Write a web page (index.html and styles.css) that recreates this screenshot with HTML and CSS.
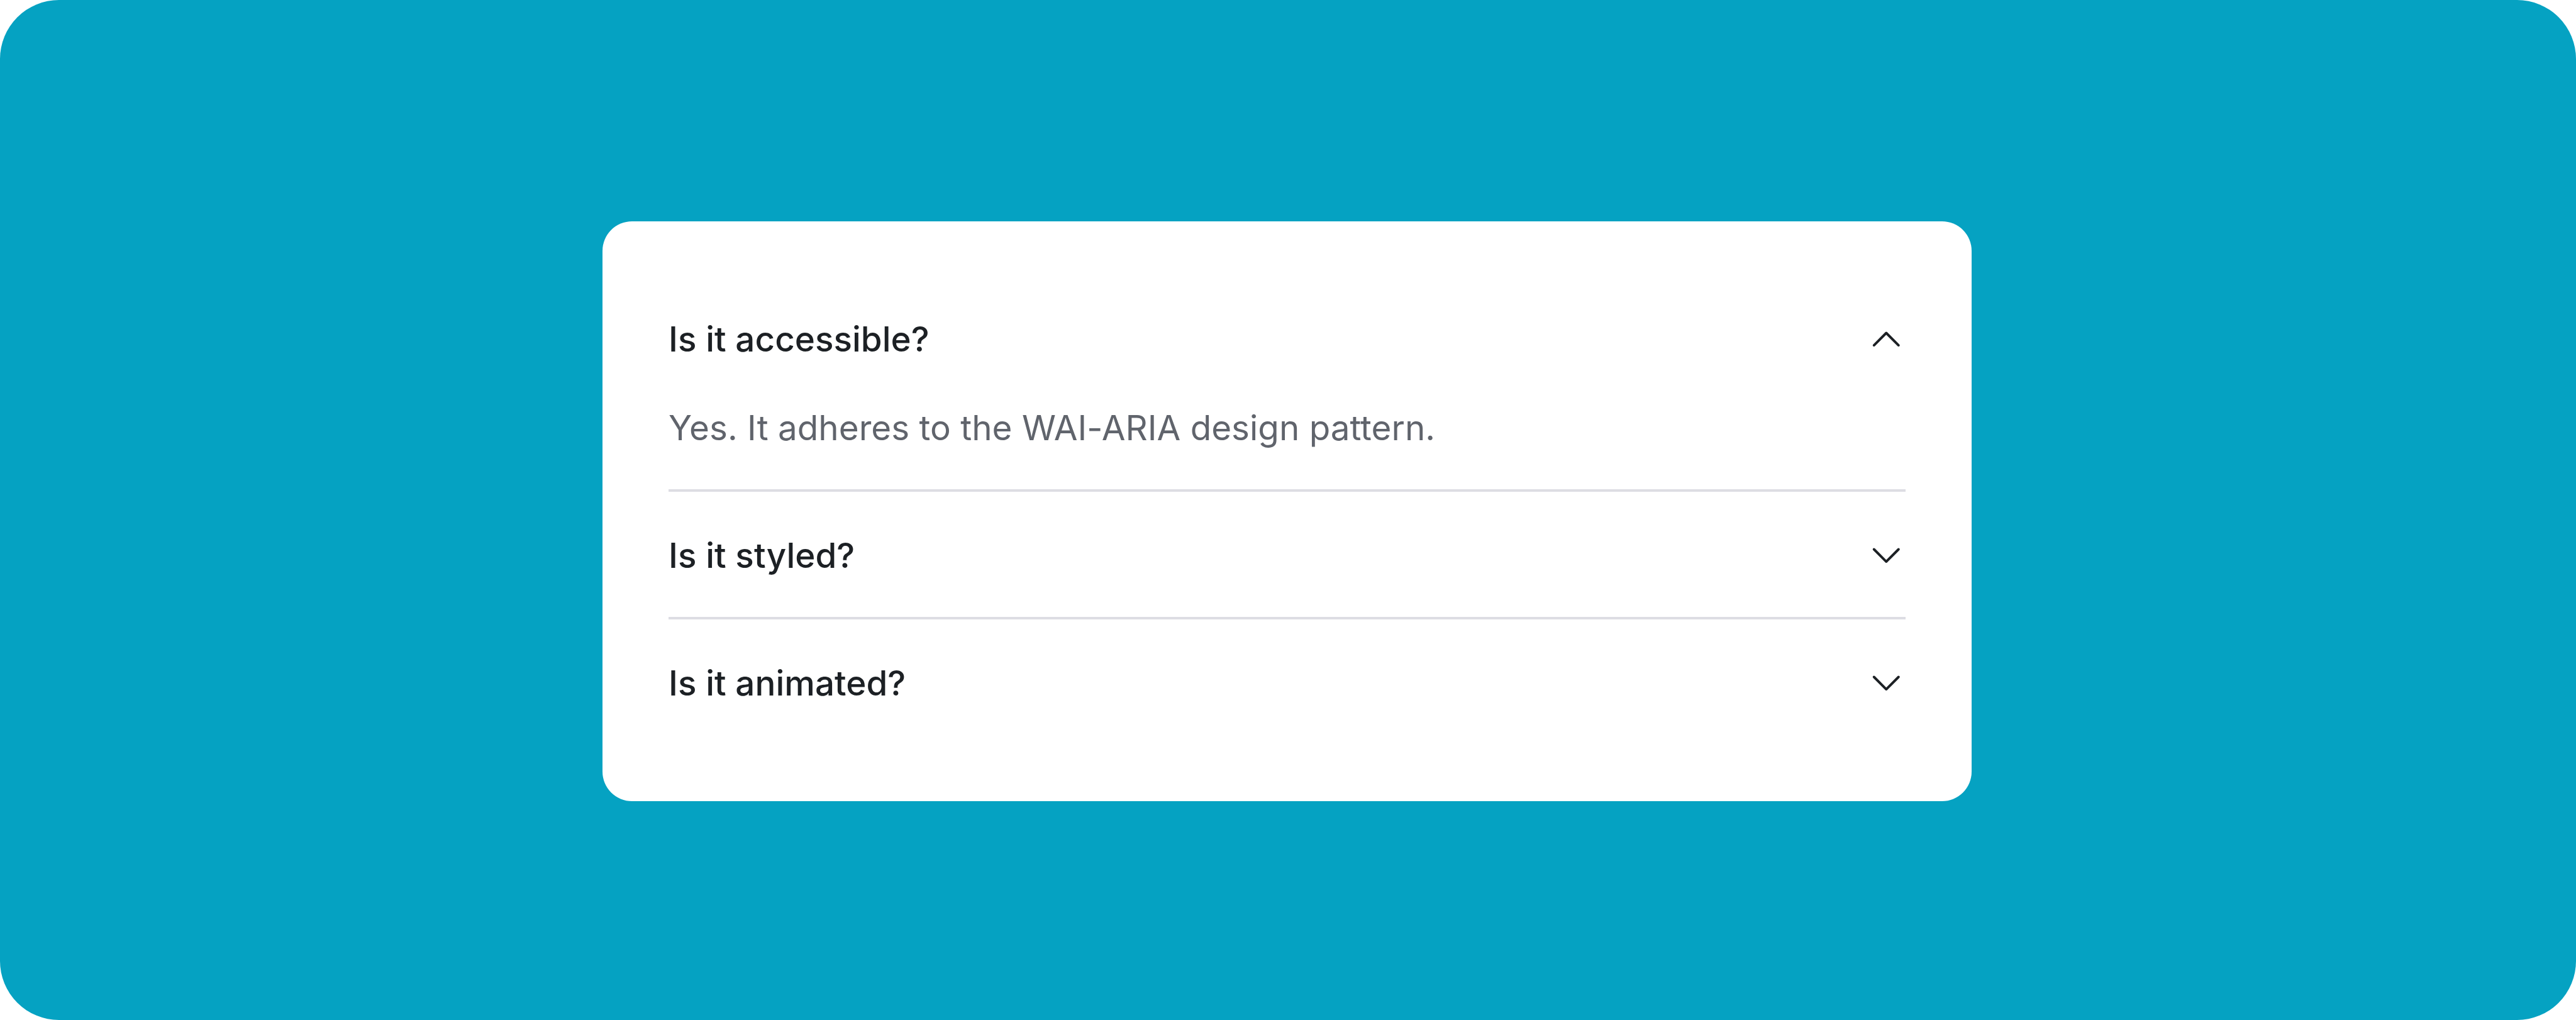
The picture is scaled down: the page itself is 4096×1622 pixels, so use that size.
FILE: index.html
```html
<!DOCTYPE html>
<html lang="en">

<head>
    <meta charset="UTF-8">
    <meta name="viewport" content="width=device-width, initial-scale=1.0">
    <title>Accordion</title>
    <link rel="stylesheet" href="styles.css">
</head>

<body>
    <main class="stage">
        <div class="accordion">
            <section class="item">
                <button class="trigger" aria-expanded="true">
                    <span>Is it accessible?</span>
                    <svg class="chevron" viewBox="0 0 16 16"><path d="M3 10.5L8 5.5L13 10.5"/></svg>
                </button>
                <p class="content">Yes. It adheres to the WAI-ARIA design pattern.</p>
            </section>
            <section class="item">
                <button class="trigger" aria-expanded="false">
                    <span>Is it styled?</span>
                    <svg class="chevron" viewBox="0 0 16 16"><path d="M3 5.5L8 10.5L13 5.5"/></svg>
                </button>
            </section>
            <section class="item">
                <button class="trigger" aria-expanded="false">
                    <span>Is it animated?</span>
                    <svg class="chevron" viewBox="0 0 16 16"><path d="M3 5.5L8 10.5L13 5.5"/></svg>
                </button>
            </section>
        </div>
    </main>
</body>

</html>
```
FILE: styles.css
```css
* {
    box-sizing: border-box;
}

/* the layout is 1048 units wide, 1rem = 10 units */
html {
    font-size: calc(100vw / 104.8);
}

body {
    margin: 0;
    background-color: white;
    font-family: Inter, "Liberation Sans", sans-serif;
}

.stage {
    display: flex;
    justify-content: center;
    align-items: flex-start;
    height: 100vh;
    padding-top: 9rem;
    padding-right: 0.1rem;
    border-radius: 2.4rem;
    background-color: #05a2c2;
}

.accordion {
    width: 55.7rem;
    height: 23.6rem;
    padding: 2.2rem 2.67rem 2.2rem 2.7rem;
    border-radius: 1.2rem;
    background-color: white;
}

.item {
    border-bottom: 4px solid #dddde3;
}

.item:last-child {
    border-bottom: none;
}

.trigger {
    display: flex;
    justify-content: space-between;
    align-items: center;
    width: 100%;
    height: 5.2rem;
    padding: 0;
    border: none;
    background: none;
    color: #1c2024;
    font-family: inherit;
    font-size: 1.4rem;
    font-weight: 500;
    line-height: 2rem;
    letter-spacing: 0.06px;
}

.item:nth-child(2) .trigger {
    height: calc(5.2rem - 4px);
    padding-top: 4px;
}

.chevron {
    width: 1.6rem;
    height: 1.6rem;
    fill: none;
    stroke: currentColor;
    stroke-width: 1;
    stroke-linecap: round;
    stroke-linejoin: round;
}

.content {
    height: calc(3.6rem - 4px);
    margin: 0;
    color: #60646c;
    font-size: 1.4rem;
    line-height: 2rem;
    letter-spacing: 0.04px;
}
```
